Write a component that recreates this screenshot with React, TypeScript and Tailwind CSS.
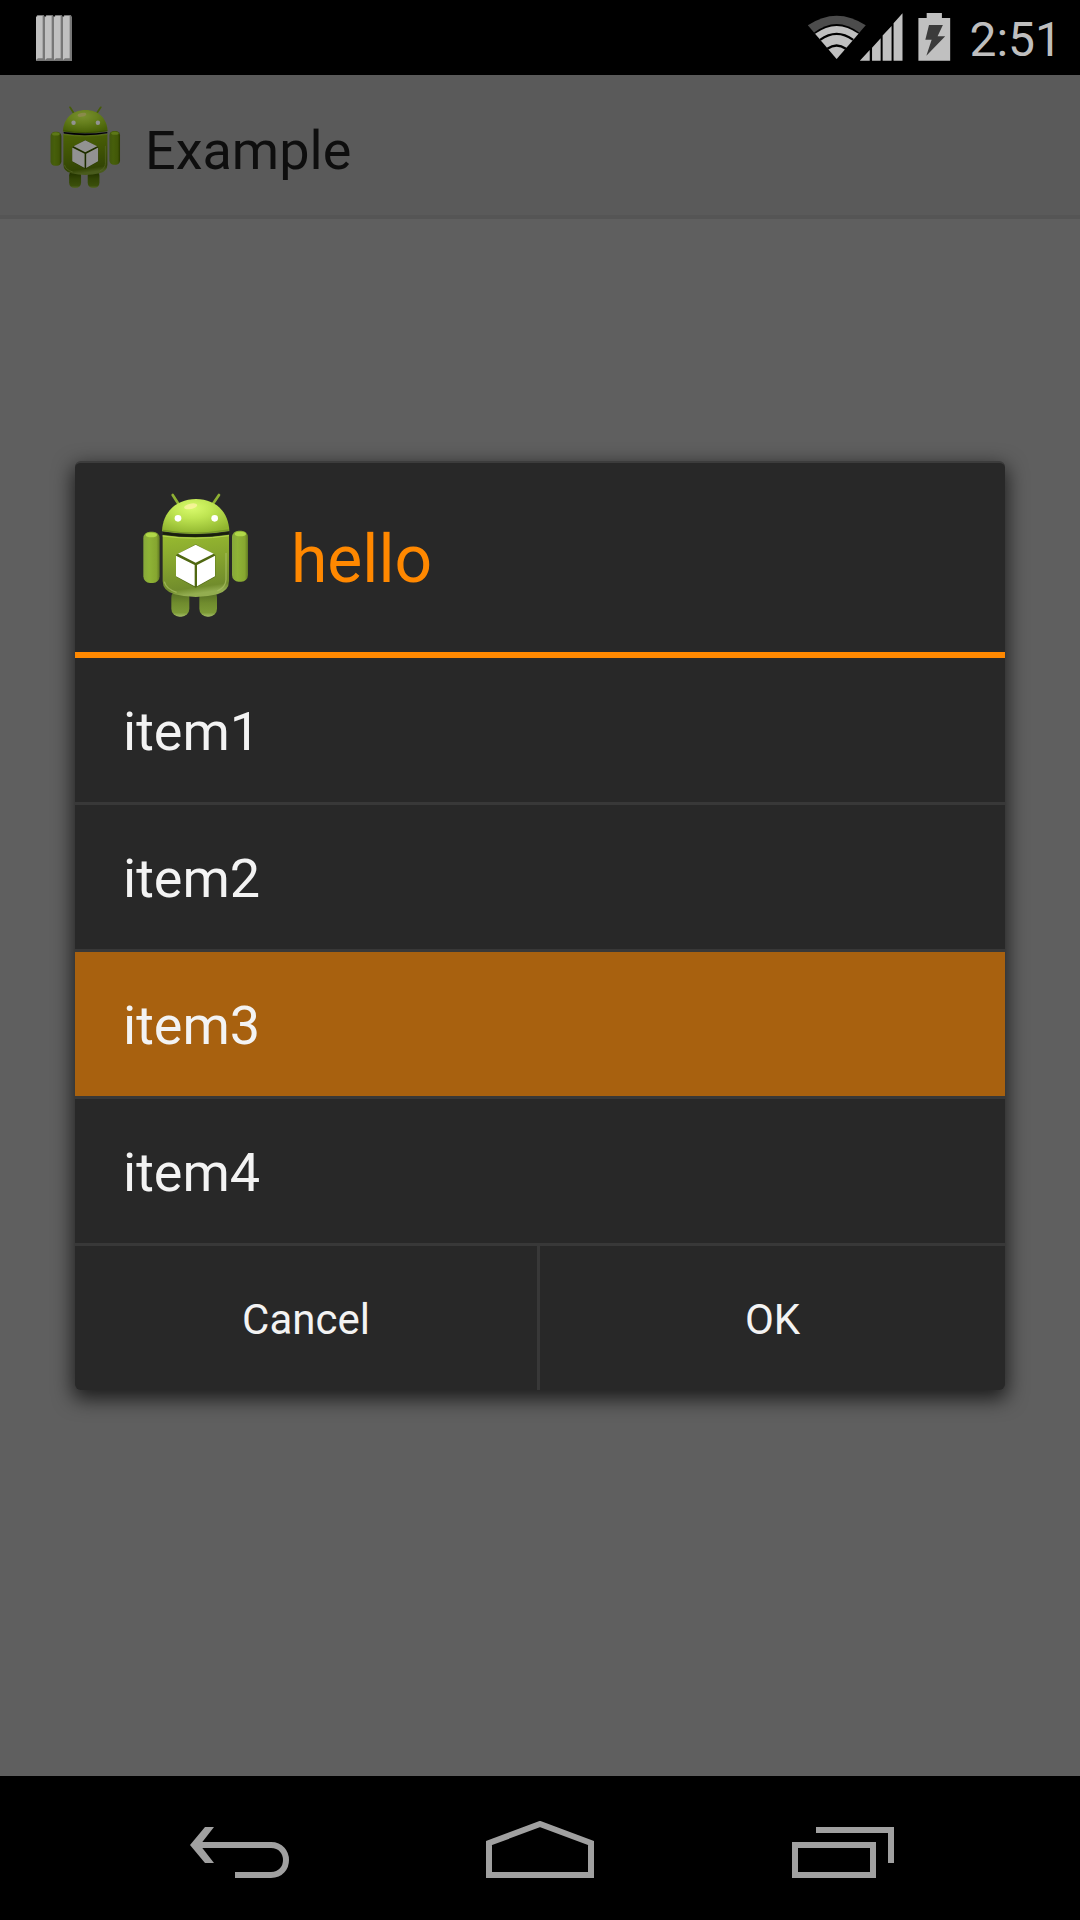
import React, { useId, useState } from "react";

function RobotIcon({ className }: { className: string }) {
  const id = useId();
  const body = `${id}body`;
  const head = `${id}head`;
  const limb = `${id}limb`;
  const leg = `${id}leg`;
  return (
    <svg viewBox="39 40 318 375" className={className} aria-hidden="true">
      <defs>
        <linearGradient id={body} x1="0" y1="0" x2="0.15" y2="1">
          <stop offset="0" stopColor="#98bb30" />
          <stop offset="0.5" stopColor="#84a22e" />
          <stop offset="0.9" stopColor="#718c2c" />
          <stop offset="1" stopColor="#93ad50" />
        </linearGradient>
        <radialGradient id={head} cx="0.45" cy="0.25" r="0.75">
          <stop offset="0" stopColor="#d9fb6c" />
          <stop offset="0.4" stopColor="#bfe552" />
          <stop offset="1" stopColor="#90b52f" />
        </radialGradient>
        <linearGradient id={limb} x1="0" y1="0" x2="1" y2="0">
          <stop offset="0" stopColor="#86a83a" />
          <stop offset="0.35" stopColor="#8fb336" />
          <stop offset="0.8" stopColor="#86a630" />
          <stop offset="1" stopColor="#617a22" />
        </linearGradient>
        <linearGradient id={leg} x1="0" y1="0" x2="0" y2="1">
          <stop offset="0" stopColor="#4f6620" />
          <stop offset="0.5" stopColor="#708c2e" />
          <stop offset="0.85" stopColor="#7c9a36" />
          <stop offset="1" stopColor="#a3bd66" />
        </linearGradient>
      </defs>
      <path d="M128 46 L146 74 M267 46 L248 74" stroke="#8eb033" strokeWidth="8" strokeLinecap="round" />
      <rect x="124" y="330" width="54" height="81" rx="24" fill={`url(#${leg})`} />
      <rect x="208" y="330" width="53" height="81" rx="24" fill={`url(#${leg})`} />
      <rect x="40" y="156" width="49" height="154" rx="20" fill={`url(#${limb})`} />
      <rect x="306" y="153" width="48" height="153" rx="20" fill={`url(#${limb})`} />
      <ellipse cx="64" cy="166" rx="17" ry="7" fill="#b0d848" />
      <ellipse cx="331" cy="163" rx="17" ry="7" fill="#b0d848" />
      <path d="M98 166 Q197 180 297 165 V304 Q297 334 262 344 Q197 360 134 344 Q98 334 98 304 Z" fill={`url(#${body})`} />
      <path d="M98 169 Q197 183 297 168" fill="none" stroke="#b4d64c" strokeWidth="3" />
      <path d="M288 220 V300 Q287 322 262 334 M103 306 Q108 328 140 338" fill="none" stroke="#a9c064" strokeWidth="4" opacity="0.7" />
      <path d="M96 155 C98 96 140 58 198 58 C256 58 296 96 298 154 Q197 172 96 155 Z" fill={`url(#${head})`} />
      <path d="M98 152 Q197 169 296 151" fill="none" stroke="#789a29" strokeWidth="4" />
      <path d="M99 158 Q197 172 297 157 L296 163 Q197 180 100 164 Z" fill="#182008" />
      <ellipse cx="182" cy="80" rx="20" ry="8" fill="#fff3a6" opacity="0.75" transform="rotate(-12 182 80)" />
      <circle cx="144" cy="116" r="10" fill="#ffffff" />
      <circle cx="254" cy="116" r="10" fill="#ffffff" />
      <path d="M138 226 L197 194 L256 226 V291 L197 324 L138 291 Z" fill="#506812" />
      <path d="M197 195 L251 222 L197 249 L144 222 Z M138 228 L194 256 V320 L138 290 Z M201 256 L255 228 V290 L201 320 Z" fill="#ffffff" />
    </svg>
  );
}

function StatusBar() {
  return (
    <header className="flex h-[75px] shrink-0 items-center justify-between bg-black pl-9 pr-[18px]">
      <svg viewBox="0 0 108 138" className="h-[46px] w-9" role="img" aria-label="Notification">
        {[0, 27, 54, 81].map((x) => (
          <g key={x}>
            <path d={`M${x} 6 L${x + 4} 0 H${x + 23} L${x + 27} 5 V138 H${x} Z`} fill="#777777" />
            <path d={`M${x} 7 L${x + 5} 3 H${x + 20} V130 H${x + 6} L${x} 135 Z`} fill="#c0c0c0" />
          </g>
        ))}
      </svg>
      <div className="flex items-center">
        <svg viewBox="82 36 432 148" className="mr-[18px] h-[49px] w-36" role="img" aria-label="Wi-Fi, signal and charging battery">
          <path d="M170 175 L83 73 Q170 15 258 73 Z" fill="#4c4c4c" />
          <path d="M170 175 L102 95 Q170 43 238 95 Z" fill="#000000" />
          <path d="M170 175 L105 99 Q170 51 236 99 Z" fill="#c0c0c0" />
          <path d="M120 117 Q170 81 220 117" fill="none" stroke="#000000" strokeWidth="7" />
          <path d="M142 144 Q170 124 198 144" fill="none" stroke="#000000" strokeWidth="7" />
          <path d="M240 180 L270 148 V180 Z M277 141 L303 112 V180 H277 Z M309 104 L336 75 V180 H309 Z M342 67 L369 37 V180 H342 Z" fill="#c0c0c0" />
          <path d="M417 51 H442 V36 H488 V51 H513 V180 H417 Z" fill="#c0c0c0" />
          <path d="M449 72 H491 L475 106 H498 L441 165 L457 117 H438 Z" fill="#3b3b3b" />
        </svg>
        <time className="pt-1 text-5xl leading-none text-[#bebebe]">2:51</time>
      </div>
    </header>
  );
}

function NavigationBar() {
  return (
    <nav className="flex h-36 shrink-0 items-center justify-center gap-[54px] bg-black">
      <button type="button" aria-label="Back" className="flex h-full w-[249px] items-center justify-center pt-1.5">
        <svg viewBox="0 0 108 60" className="h-[60px] w-[108px]" fill="none" stroke="#a0a0a0" strokeWidth="6">
          <path d="M13 24 H88 C108 24 108 54 88 54 H52" />
          <path d="M22 6 H31 L17 24 L31 42 H22 L7 24 Z" fill="#a0a0a0" stroke="none" />
        </svg>
      </button>
      <button type="button" aria-label="Home" className="flex h-full w-[249px] items-center justify-center pt-1.5">
        <svg viewBox="0 0 108 60" className="h-[60px] w-[108px]" fill="none" stroke="#a0a0a0" strokeWidth="6">
          <path d="M3 22 L54 3 L105 22 V54 H3 Z" />
        </svg>
      </button>
      <button type="button" aria-label="Recent apps" className="flex h-full w-[249px] items-center justify-center pt-1.5">
        <svg viewBox="0 0 108 60" className="h-[60px] w-[108px]" fill="none" stroke="#a0a0a0" strokeWidth="6">
          <path d="M6 24 H84 V54 H6 Z M27 9 H102 V42" />
        </svg>
      </button>
    </nav>
  );
}

const items = ["item1", "item2", "item3", "item4"];

function ListDialog() {
  const [selected, setSelected] = useState("item3");
  return (
    <section
      role="dialog"
      aria-labelledby="dialog-title"
      className="w-full overflow-hidden rounded-md border-t-2 border-[#3c3c3c] bg-[#282828] text-[#f3f3f3] shadow-[0_7px_20px_2px_rgba(0,0,0,0.7)]"
    >
      <div className="flex h-[195px] items-center border-b-6 border-[#ff8800] pb-1 pl-[68px]">
        <RobotIcon className="h-[125px] w-[106px]" />
        <h2 id="dialog-title" className="pl-[42px] pt-2 text-[66px] leading-none text-[#ff8800]">
          hello
        </h2>
      </div>
      <ul>
        {items.map((item) => (
          <li key={item} className="border-b-3 border-[#383838]">
            <button
              type="button"
              aria-pressed={item === selected}
              onClick={() => setSelected(item)}
              className={`flex h-36 w-full items-center px-12 pt-1 text-[54px] leading-none ${item === selected ? "bg-[#a8610f]" : ""}`}
            >
              {item}
            </button>
          </li>
        ))}
      </ul>
      <div className="flex h-36 text-[42px] leading-none">
        <button type="button" className="w-1/2 border-r-3 border-[#383838] pt-1">
          Cancel
        </button>
        <button type="button" className="w-1/2 pt-1">
          OK
        </button>
      </div>
    </section>
  );
}

export default function App() {
  return (
    <div className="flex min-h-screen flex-col bg-[#5f5f5f] font-[Roboto,sans-serif]">
      <StatusBar />
      <main className="relative flex flex-1 flex-col">
        <div className="flex h-36 items-center border-b-4 border-[#555555] bg-[#5a5a5a] pl-[50px] pt-1">
          <RobotIcon className="h-[83px] w-[71px] brightness-[.56] contrast-[1.2]" />
          <h1 className="pl-6 pt-2 text-[54px] leading-none text-[#0e0e0e]">Example</h1>
        </div>
        <div className="absolute inset-0 flex items-center px-[75px]">
          <ListDialog />
        </div>
      </main>
      <NavigationBar />
    </div>
  );
}
